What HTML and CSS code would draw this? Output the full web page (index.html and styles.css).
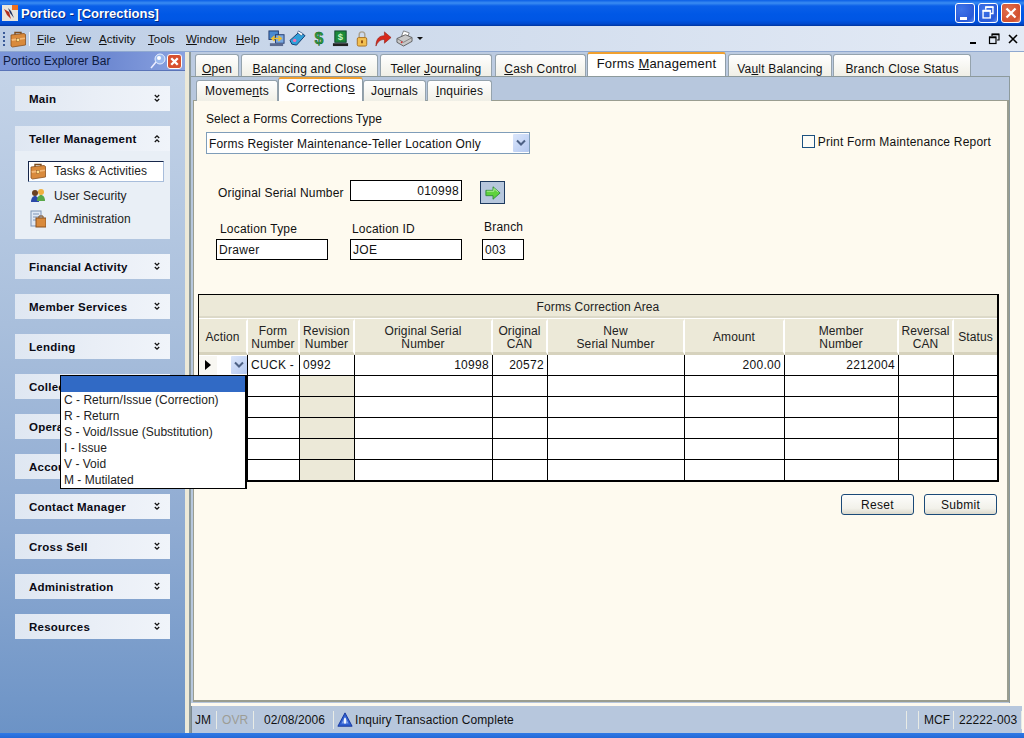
FILE: index.html
```html
<!DOCTYPE html>
<html lang="en">
<head>
<meta charset="utf-8">
<title>Portico - [Corrections]</title>
<link rel="stylesheet" href="styles.css">
</head>
<body>
<svg class="defs" width="0" height="0" aria-hidden="true">
  <symbol id="case" viewBox="0 0 16 18">
    <path d="M5 5V2.500h6V5" fill="none" stroke="#7a4a1c" stroke-width="1.400"/>
    <path d="M1 5l13-1.500 1.500 1V15l-13 2-1.500-1z" fill="#d98a3c" stroke="#8a5220" stroke-width=".8"/>
    <path d="M1.500 9l13.500-1.500v1.500L2 11z" fill="#f2b878"/>
    <rect x="6.500" y="8.500" width="3" height="3" fill="#ffe08a" stroke="#8a5220" stroke-width=".5"/>
  </symbol>
  <symbol id="chev" viewBox="0 0 6 9">
    <path d="M.8 1l2.200 2.200L5.200 1M.8 5l2.200 2.200L5.200 5" fill="none" stroke="#111" stroke-width="1.300"/>
  </symbol>
</svg>
<div class="app">
  <header class="titlebar">
    <svg class="app-icon" viewBox="0 0 16 16"><rect width="16" height="16" fill="#e8e4dc"/><rect x="10" width="6" height="5" fill="#f07020"/><path d="M2 4l5 3 2 7-4-4z" fill="#b03020"/><path d="M6 3l3 3 3 7-4-5z" fill="#203060"/></svg>
    <span class="title-text">Portico - [Corrections]</span>
    <div class="win-btns">
      <span class="win-btn"><svg viewBox="0 0 18 18"><rect x="4" y="13" width="7" height="3" fill="#fff"/></svg></span>
      <span class="win-btn"><svg viewBox="0 0 20 20"><path d="M7.500 6.500V3.500h8v7h-3" fill="none" stroke="#fff" stroke-width="1.500"/><rect x="4.500" y="7.500" width="8" height="8" fill="none" stroke="#fff" stroke-width="1.500"/><path d="M7 3.500h9M4 7.500h9" stroke="#fff" stroke-width="2"/></svg></span>
      <span class="win-btn win-close"><svg viewBox="0 0 20 20"><path d="M5 5l10 10M15 5L5 15" stroke="#fff" stroke-width="2.500"/></svg></span>
    </div>
  </header>

  <nav class="menubar">
    <span class="grip"></span>
    <svg class="menu-case"><use href="#case"/></svg>
    <span class="menu-sep"></span>
    <div class="menu-items">
      <span class="m-file"><u>F</u>ile</span>
      <span class="m-view"><u>V</u>iew</span>
      <span class="m-act"><u>A</u>ctivity</span>
      <span class="m-tools"><u>T</u>ools</span>
      <span class="m-win"><u>W</u>indow</span>
      <span class="m-help"><u>H</u>elp</span>
    </div>
    <div class="tools">
      <svg class="tool" viewBox="0 0 18 18"><rect x="1" y="1" width="10" height="9" fill="#4a8ad0" stroke="#223a70"/><rect x="8" y="5" width="9" height="9" fill="#7aa8e0" stroke="#223a70"/><rect x="2" y="14" width="14" height="3" fill="#5a6a90"/><path d="M4 9h10M11 6.500L14 9l-3 2.500M7 6.500L4 9l3 2.500" fill="none" stroke="#f0c030" stroke-width="1.500"/></svg>
      <svg class="tool" viewBox="0 0 18 18"><path d="M1 11L11 2l6 4-9 10-5-1z" fill="#2f9fd8" stroke="#123a70"/><path d="M10 1l5 3-2 2-4-3z" fill="#fff" stroke="#123a70" stroke-width=".6"/><circle cx="6" cy="11" r="1.800" fill="#f070b0"/></svg>
      <svg class="tool tool-narrow" viewBox="0 0 12 18"><text x="6" y="15" class="dollar">$</text></svg>
      <svg class="tool" viewBox="0 0 18 18"><rect x="3" y="1" width="12" height="12" fill="#1d8a3a" stroke="#143"/><text x="9" y="11" class="dollar-sm">$</text><rect x="1" y="14" width="16" height="3" fill="#222"/></svg>
      <svg class="tool tool-narrow" viewBox="0 0 12 18"><path d="M3 8V5a3 3 0 0 1 6 0v3" fill="none" stroke="#a8a090" stroke-width="1.500"/><rect x="1" y="8" width="10" height="9" rx="1.500" fill="#f2bf50" stroke="#a87020"/><rect x="5" y="11" width="2" height="3" fill="#905010"/></svg>
      <svg class="tool" viewBox="0 0 18 18"><path d="M1 17C1 9 5 6 10 6V2l7 6-7 6v-4C6 10 3 12 1 17z" fill="#d8281c" stroke="#8a1a10" stroke-width=".6"/></svg>
      <svg class="tool" viewBox="0 0 18 18"><path d="M8 1l6 2-2 5-6-2z" fill="#fff" stroke="#555" stroke-width=".7"/><path d="M1 9l9-4 7 3v4l-9 5-7-4z" fill="#c8c8c8" stroke="#444" stroke-width=".8"/><path d="M1 9l7 4 9-5" fill="none" stroke="#666" stroke-width=".7"/><circle cx="6" cy="13" r="1" fill="#d03030"/></svg>
      <span class="caret"></span>
    </div>
    <div class="mdi-btns">
      <svg viewBox="0 0 12 12"><rect x="1" y="9" width="6" height="2" fill="#000"/></svg>
      <svg viewBox="0 0 12 12"><path d="M4 3V1h7v6H9" fill="none" stroke="#000" stroke-width="1.200"/><rect x="1.500" y="4" width="6.500" height="6.500" fill="none" stroke="#000" stroke-width="1.200"/><path d="M1 4.500h7M4 1.500h7" stroke="#000" stroke-width="1.500"/></svg>
      <svg viewBox="0 0 12 12"><path d="M2 2l8 8M10 2l-8 8" stroke="#000" stroke-width="1.600"/></svg>
    </div>
  </nav>

  <div class="workspace">
    <aside class="sidebar">
      <div class="side-head">
        <span>Portico Explorer Bar</span>
        <svg class="pin" viewBox="0 0 16 16"><path d="M1 15l5-6" stroke="#eef" stroke-width="1.500"/><circle cx="10" cy="6" r="5" fill="#9ab8ee" stroke="#e8f0ff"/><circle cx="9" cy="5" r="2" fill="#fff"/></svg>
        <span class="side-close"><svg viewBox="0 0 12 12"><path d="M3 3l6 6M9 3L3 9" stroke="#fff" stroke-width="2.200"/></svg></span>
      </div>
      <div class="groups">
        <div class="group"><div class="g-head">Main<svg class="chev"><use href="#chev"/></svg></div></div>
        <div class="group">
          <div class="g-head">Teller Management<svg class="chev chev-up"><use href="#chev"/></svg></div>
          <div class="g-body">
            <div class="g-item selected"><svg class="g-icon"><use href="#case"/></svg>Tasks &amp; Activities</div>
            <div class="g-item"><svg class="g-icon" viewBox="0 0 16 16"><circle cx="5" cy="5" r="3" fill="#6a4020"/><path d="M1 14c0-4 2-6 4-6s4 2 4 6z" fill="#2a48a8"/><circle cx="11" cy="4" r="3" fill="#f0b040"/><path d="M7 13c0-4 2-6 4-6s4 2 4 6z" fill="#58a848"/></svg>User Security</div>
            <div class="g-item"><svg class="g-icon" viewBox="0 0 16 18"><rect x="1" y="1" width="10" height="15" fill="#dfe8f5" stroke="#7f95b5"/><path d="M3 4h6M3 7h6M3 10h4" stroke="#7f95b5"/><rect x="6" y="8" width="10" height="9" fill="#d98a3c" stroke="#8a5220"/><path d="M9 8V6h4v2" fill="none" stroke="#7a4a1c"/></svg>Administration</div>
          </div>
        </div>
        <div class="group"><div class="g-head">Financial Activity<svg class="chev"><use href="#chev"/></svg></div></div>
        <div class="group"><div class="g-head">Member Services<svg class="chev"><use href="#chev"/></svg></div></div>
        <div class="group"><div class="g-head">Lending<svg class="chev"><use href="#chev"/></svg></div></div>
        <div class="group"><div class="g-head">Collections<svg class="chev"><use href="#chev"/></svg></div></div>
        <div class="group"><div class="g-head">Operations<svg class="chev"><use href="#chev"/></svg></div></div>
        <div class="group"><div class="g-head">Accounts<svg class="chev"><use href="#chev"/></svg></div></div>
        <div class="group"><div class="g-head">Contact Manager<svg class="chev"><use href="#chev"/></svg></div></div>
        <div class="group"><div class="g-head">Cross Sell<svg class="chev"><use href="#chev"/></svg></div></div>
        <div class="group"><div class="g-head">Administration<svg class="chev"><use href="#chev"/></svg></div></div>
        <div class="group"><div class="g-head">Resources<svg class="chev"><use href="#chev"/></svg></div></div>
      </div>
    </aside>
    <div class="splitter"></div>
    <main class="main">
      <div class="tabs tabs-top">
        <span class="tab t-open"><u>O</u>pen</span>
        <span class="tab t-bal"><u>B</u>alancing and Close</span>
        <span class="tab t-jour">Teller <u>J</u>ournaling</span>
        <span class="tab t-cash"><u>C</u>ash Control</span>
        <span class="tab active t-forms">Forms <u>M</u>anagement</span>
        <span class="tab t-vault">Va<u>u</u>lt Balancing</span>
        <span class="tab t-branch">Branch Close Status</span>
      </div>
      <div class="outer-panel">
        <div class="tabs tabs-sub">
          <span class="tab t-mov">Moveme<u>n</u>ts</span>
          <span class="tab active t-cor">Correction<u>s</u></span>
          <span class="tab t-jnl">Jo<u>u</u>rnals</span>
          <span class="tab t-inq"><u>I</u>nquiries</span>
        </div>
        <section class="content">
          <div class="select-label">Select a Forms Corrections Type</div>
          <div class="select-row">
            <div class="select"><span class="sel-text">Forms Register Maintenance-Teller Location Only</span><span class="sel-btn"><svg viewBox="0 0 10 8"><path d="M1 1.500l4 4 4-4" fill="none" stroke="#4d6185" stroke-width="2"/></svg></span></div>
            <label class="print"><span class="check"></span>Print Form Maintenance Report</label>
          </div>
          <div class="serial-row">
            <span class="serial-label">Original Serial Number</span>
            <span class="field f-wide right">010998</span>
            <span class="go"><svg viewBox="0 0 20 18"><path d="M2 6h8V2l8 7-8 7v-4H2z" fill="#5fd23c" stroke="#2f8a3a"/><path d="M3 7h8V4l5 4" fill="none" stroke="#b5f0a0"/></svg></span>
          </div>
          <div class="loc-row">
            <div class="loc loc-type"><span class="loc-label">Location Type</span><span class="field f-wide">Drawer</span></div>
            <div class="loc loc-id"><span class="loc-label">Location ID</span><span class="field f-wide">JOE</span></div>
            <div class="loc loc-branch"><span class="loc-label">Branch</span><span class="field f-small">003</span></div>
          </div>
          <table class="grid">
            <colgroup>
              <col class="c1"><col class="c2"><col class="c3"><col class="c4"><col class="c5"><col class="c6"><col class="c7"><col class="c8"><col class="c9"><col class="c10">
            </colgroup>
            <thead>
              <tr><th colspan="10" class="grid-title">Forms Correction Area</th></tr>
              <tr class="grid-head">
                <th>Action</th><th>Form<br>Number</th><th>Revision<br>Number</th><th>Original Serial<br>Number</th><th>Original<br>CAN</th><th>New<br>Serial Number</th><th>Amount</th><th>Member<br>Number</th><th>Reversal<br>CAN</th><th>Status</th>
              </tr>
            </thead>
            <tbody>
              <tr>
                <td class="action"><div class="action-in"><span class="row-mark"><span class="tri"></span></span><span class="sel-btn"><svg viewBox="0 0 10 8"><path d="M1 1.500l4 4 4-4" fill="none" stroke="#4d6185" stroke-width="2"/></svg></span></div></td>
                <td>CUCK -</td><td>0992</td><td class="right">10998</td><td class="right">20572</td><td></td><td class="right">200.00</td><td class="right">2212004</td><td></td><td></td>
              </tr>
              <tr><td></td><td></td><td class="ro"></td><td></td><td></td><td></td><td></td><td></td><td></td><td></td></tr>
              <tr><td></td><td></td><td class="ro"></td><td></td><td></td><td></td><td></td><td></td><td></td><td></td></tr>
              <tr><td></td><td></td><td class="ro"></td><td></td><td></td><td></td><td></td><td></td><td></td><td></td></tr>
              <tr><td></td><td></td><td class="ro"></td><td></td><td></td><td></td><td></td><td></td><td></td><td></td></tr>
              <tr><td></td><td></td><td class="ro"></td><td></td><td></td><td></td><td></td><td></td><td></td><td></td></tr>
            </tbody>
          </table>
          <div class="actions">
            <button class="btn" type="button">Reset</button>
            <button class="btn" type="button">Submit</button>
          </div>
        </section>
      </div>
      <footer class="status">
        <span class="st st-jm">JM</span>
        <span class="st st-ovr">OVR</span>
        <span class="st st-date">02/08/2006</span>
        <span class="st st-msg"><svg class="info" viewBox="0 0 18 18"><path d="M9 1l8 15H1z" fill="#2f5fd0" stroke="#10309a"/><path d="M9 5l4 8H5z" fill="#7fa0ea"/><rect x="8" y="7" width="2" height="6" fill="#fff"/></svg>Inquiry Transaction Complete</span>
        <span class="st st-e1"></span>
        <span class="st st-mcf">MCF</span>
        <span class="st st-acct">22222-003</span>
      </footer>
    </main>
  </div>
  <div class="bottom-strip"></div>

  <ul class="dropdown">
    <li class="dd-sel"></li>
    <li>C - Return/Issue (Correction)</li>
    <li>R - Return</li>
    <li>S - Void/Issue (Substitution)</li>
    <li>I - Issue</li>
    <li>V - Void</li>
    <li>M - Mutilated</li>
  </ul>
</div>
</body>
</html>
```

FILE: styles.css
```css
* { box-sizing: border-box; }
html, body { margin: 0; padding: 0; width: 1024px; height: 738px; overflow: hidden; }
body { font-family: "Liberation Sans", Arial, sans-serif; font-size: 12px; color: #111; letter-spacing: .05px; }
.defs { position: absolute; }
.app { position: relative; width: 1024px; height: 738px; display: flex; flex-direction: column; background: #fefaef; }

/* Title bar */
.titlebar { height: 26px; flex: none; display: flex; align-items: center; padding: 0 3px 0 2px;
  background: linear-gradient(#0a5ee6 0, #3a8cf2 3px, #0a5fe8 6px, #0058e6 14px, #0056e4 20px, #0048cc 24px, #00349c 26px); }
.app-icon { width: 16px; height: 16px; flex: none; }
.title-text { margin-left: 3px; color: #fff; font-weight: bold; font-size: 13px; letter-spacing: 0; text-shadow: 1px 1px 0 #0a2a80; }
.win-btns { margin-left: auto; display: flex; gap: 3px; }
.win-btn { width: 20px; height: 20px; border: 1px solid #fff; border-radius: 3px; background: radial-gradient(circle at 30% 30%, #3f74e8, #2a5ad8 70%, #5f8ff0); }
.win-btn svg { display: block; width: 18px; height: 18px; }
.win-close { background: radial-gradient(circle at 35% 35%, #e0704f, #d2502e 70%, #e88b6e); }

/* Menu bar */
.menubar { height: 26px; flex: none; display: flex; align-items: center; border-bottom: 1px solid #8fa8d0;
  background: linear-gradient(90deg, #bccde5, #cfdbec 40%, #e4ebf6); }
.grip { width: 2px; height: 14px; margin-left: 3px; background: repeating-linear-gradient(#3a5a98 0 2px, transparent 2px 4px); }
.menu-case { width: 16px; height: 18px; margin-left: 5px; flex: none; }
.menu-sep { width: 1px; height: 14px; margin-left: 3px; background: #f4f7fb; }
.menu-items { display: flex; margin-left: 7px; width: 231px; font-size: 11.500px; letter-spacing: 0; }
.m-file { width: 29px; } .m-view { width: 33px; } .m-act { width: 49px; } .m-tools { width: 38px; } .m-win { width: 50px; }
.tools { display: flex; align-items: center; gap: 4px; }
.tool { width: 17px; height: 17px; flex: none; margin-right: 0; }
.tool-narrow { width: 12px; margin: 0 3px; }
.dollar { font: bold 17px "Liberation Sans", sans-serif; fill: #2c9a3c; text-anchor: middle; stroke: #0f4f20; stroke-width: .4px; }
.dollar-sm { font: bold 10px "Liberation Sans", sans-serif; fill: #c8f5c0; text-anchor: middle; }
.caret { width: 0; height: 0; border: 3px solid transparent; border-top: 3px solid #111; border-bottom: 0; margin-left: 0; }
.mdi-btns { margin-left: auto; margin-right: 5px; display: flex; gap: 5px; }
.mdi-btns svg { width: 12px; height: 12px; display: block; margin-left: 2px; }

/* Workspace */
.workspace { flex: 1; min-height: 0; display: flex; }
.sidebar { width: 185px; flex: none; display: flex; flex-direction: column;
  background: linear-gradient(#c6d5e9, #a9bfdc 40%, #8fabd2 70%, #6c93c6); }
.side-head { height: 19px; flex: none; display: flex; align-items: center; padding: 0 3px; color: #0e1a40;
  background: linear-gradient(90deg, #7b95d8, #6f8ad2 60%, #8aa2e0); border-bottom: 1px solid #5a74b8; font-size: 12px; letter-spacing: 0; }
.pin { width: 16px; height: 16px; margin-left: auto; }
.side-close { width: 15px; height: 15px; margin-left: 1px; border: 1px solid #fff; border-radius: 3px; background: #d8502e; }
.side-close svg { display: block; width: 13px; height: 13px; }
.groups { padding: 15px 15px 0; display: flex; flex-direction: column; gap: 15px; }
.g-head { height: 25px; display: flex; align-items: center; justify-content: space-between; padding: 0 10px 0 14px;
  font-weight: bold; font-size: 11.500px; letter-spacing: .25px; color: #0a0a14;
  background: linear-gradient(90deg, #dfe7f2, #e9eef6 50%, #f0f4fa); white-space: nowrap; }
.chev { width: 6px; height: 9px; flex: none; }
.chev-up { transform: scaleY(-1); }
.g-body { height: 88px; background: #e9eff6; padding: 10px 6px 0 13px; }
.g-item { height: 21px; margin-bottom: 2px; display: flex; align-items: center; padding-left: 2px; color: #222; letter-spacing: .05px; font-size: 12px; }
.g-item.selected { background: #fff; border: 1px solid #a8bddb; border-left-color: #16264a; border-top-color: #16264a; padding-left: 1px; padding-bottom: 1px; margin-bottom: 3px; }
.g-icon { width: 16px; height: 18px; margin-right: 8px; flex: none; }

.splitter { width: 6px; flex: none; background: #ece9d8; border-right: 2px solid #8d9a9c; }

/* Main */
.main { flex: 1; min-width: 0; display: flex; flex-direction: column; position: relative; }
.tabs { display: flex; align-items: flex-end; }
.tab { height: 22px; display: block; text-align: center; flex: none; padding-top: 7px; line-height: 14px; white-space: nowrap;
  border: 1px solid #95a3ad; border-bottom: 0; border-radius: 3px 3px 0 0;
  background: linear-gradient(#fff, #f0efe6); color: #111; letter-spacing: .2px; }
.tab.active { background: #fff; border-top: 2px solid #f0a030; border-color: #f0a030 #8f9da7 transparent; padding-top: 3px; }
.tabs-top { height: 24px; width: 819px; background: #bccbe1; padding-left: 4px; margin-bottom: 0; }
.t-open { width: 44px; margin-right: 2px; } .t-bal { width: 137px; margin-right: 2px; } .t-jour { width: 112px; margin-right: 3px; }
.t-cash { width: 91px; margin-right: 1px; } .t-forms { width: 139px; height: 24px; font-size: 13px; margin-right: 2px; }
.t-vault { width: 104px; margin-right: 1px; } .t-branch { width: 138px; }
.outer-panel { width: 819px; height: 628px; background: #b7c7dd; border-top: 1px solid #8d9a9c; border-right: 1px solid #8d9a9c; padding-top: 0; }
.tabs-sub { height: 24px; padding-left: 5px; position: relative; z-index: 1; }
.tabs-sub .tab { height: 21px; padding-top: 3px; }
.tabs-sub .tab.t-cor { height: 24px; width: 85px; font-size: 13px; padding-top: 2px; }
.t-mov { width: 82px; }
.t-jnl { width: 63px; margin-right: 1px; } .t-inq { width: 65px; }
.content { margin: -1px 0 0 2px; width: 816px; height: 602px; background: #fefaef;
  border: 1px solid #9a9d90; border-right-width: 2px; border-bottom-width: 2px; padding: 11px 10px 0 4px; }
.select-label { margin-left: 8px; height: 14px; line-height: 14px; }
.select-row { display: flex; justify-content: space-between; align-items: flex-start; margin: 6px 6px 0 8px; }
.select { width: 324px; height: 22px; border: 1px solid #7f9db9; background: #fff; padding-left: 2px; display: flex; justify-content: space-between; align-items: center; letter-spacing: .18px; }
.sel-text { padding-top: 2px; }
.sel-btn { width: 16px; height: 18px; background: linear-gradient(135deg, #dbe6fb, #b4c8f0); display: flex; align-items: center; justify-content: center; flex: none; border-radius: 1px; }
.sel-btn svg { width: 10px; height: 8px; }
.print { display: flex; align-items: center; margin-top: 3px; height: 13px; letter-spacing: .2px; }
.check { width: 13px; height: 13px; border: 1px solid #1c5180; background: #fdfcf6; margin-right: 3px; }
.serial-row { display: flex; align-items: flex-start; margin: 26px 0 0 20px; height: 24px; }
.serial-label { width: 132px; line-height: 27px; letter-spacing: .2px; white-space: nowrap; }
.field { height: 21px; border: 1px solid #000; background: #fff; padding: 0 2px; line-height: 20px; display: block; letter-spacing: .3px; }
.f-wide { width: 112px; } .f-small { width: 42px; }
.right { text-align: right; }
.go { width: 25px; height: 23px; margin: 1px 0 0 18px; background: #b7c7dd; border: 1px solid #1e3a5f; display: flex; align-items: center; justify-content: center; }
.go svg { width: 18px; height: 16px; }
.loc-row { display: flex; margin: 18px 0 0 18px; height: 38px; align-items: flex-end; }
.loc { display: flex; flex-direction: column; }
.loc-label { height: 15px; line-height: 15px; display: block; margin-bottom: 2px; letter-spacing: .2px; }
.loc-type { margin-right: 22px; } .loc-type .loc-label { padding-left: 4px; }
.loc-id { margin-right: 20px; } .loc-id .loc-label { padding-left: 2px; }
.loc-branch .loc-label { padding-left: 2px; margin-bottom: 4px; }

/* Table */
.grid { margin: 34px 0 0 0; width: 801px; table-layout: fixed; border-collapse: separate; border-spacing: 0; border-top: 1px solid #000; border-left: 1px solid #000; border-right: 2px solid #000; border-bottom: 2px solid #000; background: #fff; letter-spacing: .1px; }
.c1 { width: 49px; } .c2 { width: 52px; } .c3 { width: 55px; } .c4 { width: 138px; } .c5 { width: 55px; }
.c6 { width: 137px; } .c7 { width: 100px; } .c8 { width: 114px; } .c9 { width: 55px; } .c10 { width: 43px; }
.grid th { font-weight: normal; background: #ece9d8; padding: 0; color: #222; }
.grid-title { height: 24px; border-bottom: 1px solid #fff; box-shadow: inset 0 -2px 0 #dcd9c8; }
.grid-head th { height: 36px; padding-top: 2px; line-height: 12.500px; border-right: 2px solid #fff; border-bottom: 3px solid #d6d2bd; border-top: 2px solid #ece9d8; background-clip: padding-box; }
.grid-head th:last-child { border-right: 0; }
.grid td { height: 21px; padding: 0 3px; border-right: 1px solid #000; border-bottom: 1px solid #000; white-space: nowrap; overflow: hidden; background: #fff; line-height: 20px; color: #111; letter-spacing: .3px; }
.grid td:last-child { border-right: 0; }
.grid tr:last-child td { border-bottom: 0; height: 20px; }
.grid td.ro { background: #ece9d8; }
.grid td.action { padding: 0; }
.action-in { display: flex; justify-content: space-between; align-items: center; height: 20px; padding-right: 0; }
.row-mark { width: 18px; height: 19px; background: #f8f7f2; display: flex; align-items: center; justify-content: center; }
.tri { width: 0; height: 0; border: 5px solid transparent; border-left: 6px solid #000; border-right: 0; }

.actions { display: flex; justify-content: flex-end; gap: 10px; margin: 12px 0 0 0; width: 799px; }
.btn { width: 73px; height: 21px; font: inherit; color: #111; padding: 0; letter-spacing: .3px; border: 1px solid #1b4a78; border-radius: 3px; background: linear-gradient(#fdfdfb, #f2f1ea 70%, #dcd9cc); }

/* Status */
.status { margin-top: 3px; height: 27px; width: 831px; background: #b7c7dd; display: flex; align-items: center; letter-spacing: .1px; border-left: 1px solid #7c8a90; }
.st { height: 18px; line-height: 18px; border-right: 1px solid #e8ebe6; white-space: nowrap; display: flex; align-items: center; flex: none; }
.st-jm { width: 25px; padding-left: 3px; }
.st-ovr { width: 37px; padding-left: 5px; color: #9d9d95; }
.st-date { width: 80px; padding-left: 10px; }
.st-msg { width: 573px; padding-left: 3px; letter-spacing: .1px; }
.info { width: 16px; height: 16px; margin-right: 2px; }
.st-e1 { width: 12px; }
.st-mcf { width: 35px; padding-left: 5px; }
.st-acct { width: 68px; padding-left: 5px; }
.bottom-strip { height: 5px; flex: none; background: linear-gradient(#2f7ae6, #2468d6); }

/* Dropdown */
.dropdown { position: absolute; left: 60px; top: 375px; width: 187px; height: 114px; margin: 0; padding: 0; list-style: none; background: #fff; border: 1px solid #000; border-right-width: 2px; border-bottom-width: 1px; letter-spacing: .02px; z-index: 5; }
.dropdown li { height: 16px; line-height: 17px; padding-left: 3px; color: #222; white-space: nowrap; }
.dropdown .dd-sel { background: #316ac5; height: 16px; }
```
